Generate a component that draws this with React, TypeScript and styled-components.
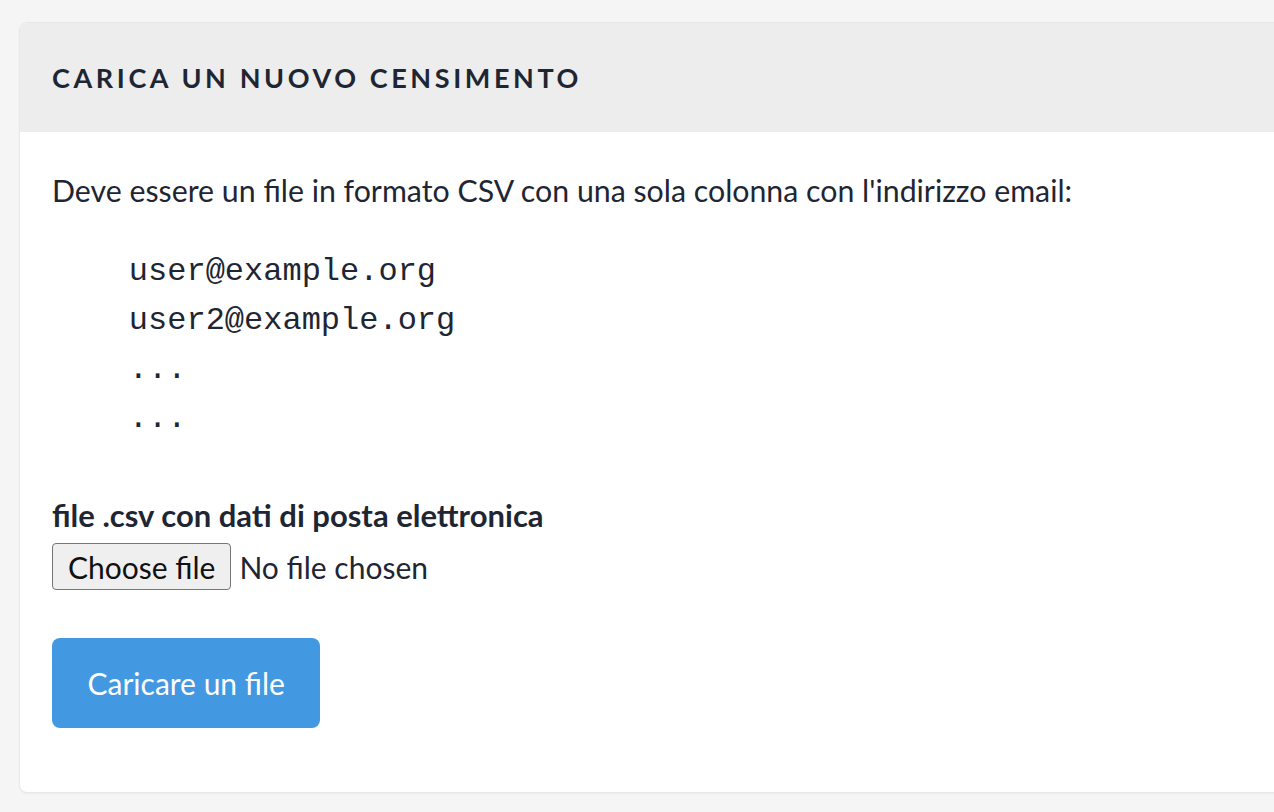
import React from "react";
import styled, { createGlobalStyle } from "styled-components";

const GlobalStyle = createGlobalStyle`
  html, body {
    margin: 0;
    padding: 0;
    background: #f5f5f5;
    overflow: hidden;
  }
  body {
    font-family: Lato, "Noto Sans", sans-serif;
    color: #1f2633;
  }
  * { box-sizing: border-box; }
`;

const Page = styled.div`
  width: 1274px;
  height: 812px;
  padding: 22px 0 0 19px;
  overflow: hidden;
`;

const Card = styled.section`
  width: 1300px;
  background: #ffffff;
  border: 1px solid #e8e8e8;
  border-radius: 8px;
  overflow: hidden;
  box-shadow: 0 1px 2px rgba(0, 0, 0, 0.04);
`;

const CardHeader = styled.header`
  height: 109px;
  display: flex;
  align-items: center;
  padding: 0 32px;
  background: #ededed;
`;

const Title = styled.h2`
  margin: 0;
  font-size: 27px;
  font-weight: 700;
  letter-spacing: 3.6px;
  text-transform: uppercase;
  color: #1f2633;
`;

const CardBody = styled.div`
  padding: 34px 32px 64px;
`;

const Intro = styled.p`
  margin: 0;
  font-size: 30.3px;
  line-height: 48px;
`;

const Example = styled.pre`
  margin: 33px 0 0;
  font-family: "Liberation Mono", "DejaVu Sans Mono", monospace;
  font-size: 32px;
  line-height: 49px;
  color: #1f2633;
`;

const Field = styled.div`
  margin-top: 52px;
  display: flex;
  flex-direction: column;
  align-items: flex-start;
`;

const Label = styled.label`
  font-size: 31px;
  font-weight: 700;
  line-height: 40px;
`;

const FileRow = styled.div`
  display: flex;
  align-items: center;
  gap: 8px;
  margin-top: 8px;
`;

const FileButton = styled.label`
  display: inline-flex;
  align-items: center;
  justify-content: center;
  height: 47px;
  padding: 0 15px;
  background: #efefef;
  border: 1.5px solid #767676;
  border-radius: 4px;
  font-size: 30px;
  color: #111;
  cursor: pointer;
`;

const HiddenInput = styled.input`
  display: none;
`;

const FileStatus = styled.span`
  font-size: 30px;
  color: #1f2633;
`;

const Submit = styled.button`
  margin-top: 48px;
  height: 90px;
  padding: 0 35.5px;
  border: none;
  border-radius: 8px;
  background: #4299e1;
  color: #ffffff;
  font-family: Lato, "Noto Sans", sans-serif;
  font-size: 30px;
  cursor: pointer;
`;

export default function App() {
  return (
    <>
      <GlobalStyle />
      <Page>
        <Card>
          <CardHeader>
            <Title>Carica un nuovo censimento</Title>
          </CardHeader>
          <CardBody>
            <Intro>
              Deve essere un file in formato CSV con una sola colonna con l'indirizzo email:
            </Intro>
            <Example>{`    user@example.org
    user2@example.org
    ...
    ...`}</Example>
            <Field>
              <Label htmlFor="csv">file .csv con dati di posta elettronica</Label>
              <FileRow>
                <FileButton htmlFor="csv">Choose file</FileButton>
                <HiddenInput id="csv" type="file" accept=".csv" />
                <FileStatus>No file chosen</FileStatus>
              </FileRow>
            </Field>
            <Submit type="submit">Caricare un file</Submit>
          </CardBody>
        </Card>
      </Page>
    </>
  );
}
